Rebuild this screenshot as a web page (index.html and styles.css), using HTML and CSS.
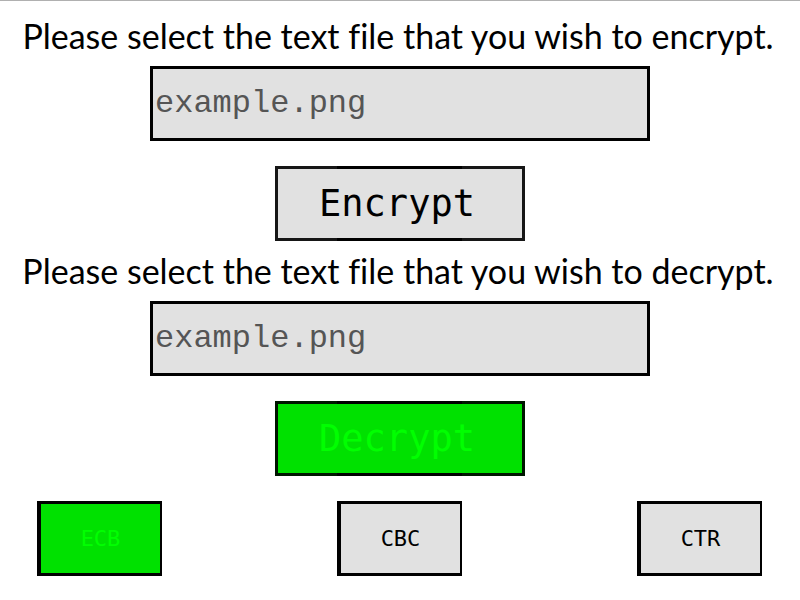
FILE: index.html
```html
<!DOCTYPE html>
<html lang="en">
<head>
  <meta charset="utf-8">
  <title>File encryption</title>
  <meta name="viewport" content="width=device-width, initial-scale=1">
  <link rel="stylesheet" href="styles.css">
</head>
<body>
  <main class="app">
    <section class="task">
      <label class="prompt" for="encrypt-file">Please select the text file that you wish to encrypt.</label>
      <input class="field" id="encrypt-file" type="text" value="example.png">
      <button class="button action" type="button">Encrypt</button>
    </section>
    <section class="task">
      <label class="prompt" for="decrypt-file">Please select the text file that you wish to decrypt.</label>
      <input class="field" id="decrypt-file" type="text" value="example.png">
      <button class="button action selected" type="button">Decrypt</button>
    </section>
    <div class="modes">
      <button class="button mode selected" type="button">ECB</button>
      <button class="button mode" type="button">CBC</button>
      <button class="button mode" type="button">CTR</button>
    </div>
  </main>
</body>
</html>
```

FILE: styles.css
```css
* {
  box-sizing: border-box;
}

body {
  margin: 0;
  background: #fff;
  color: #000;
}

.app {
  padding-top: 5px;
  border-top: 1px solid #b0b0b0;
}

.task {
  display: flex;
  flex-direction: column;
  align-items: center;
}

.prompt {
  padding-right: 4px;
  font: 34px/60px Lato, sans-serif;
  font-variant-ligatures: none;
  white-space: nowrap;
}

.field {
  width: 500px;
  max-width: 100%;
  height: 75px;
  margin-bottom: 25px;
  padding: 0 2px;
  border: 3px solid #000;
  border-radius: 0;
  background: #e1e1e1;
  color: #555;
  font: 32px "Liberation Mono", monospace;
}

.button {
  height: 75px;
  padding: 0;
  border: 3px solid #000;
  border-radius: 0;
  background: #e1e1e1;
  color: #000;
  font-family: "DejaVu Sans Mono", monospace;
}

.action {
  width: 250px;
  padding-right: 6px;
  border-image: linear-gradient(90deg, #161616 25%, #000 25% 75%, #161616 75%) 3;
  font-size: 37px;
}

.mode {
  width: 125px;
  border-width: 3px 2px 3px 4px;
  font-size: 22px;
}

.selected {
  background: #00e100;
  color: #00ff00;
}

.action.selected {
  border-image: linear-gradient(90deg, #001600 25%, #000 25% 75%, #001600 75%) 3;
}

.modes {
  display: flex;
  justify-content: space-between;
  padding: 25px 38px 24px 37px;
}
```
